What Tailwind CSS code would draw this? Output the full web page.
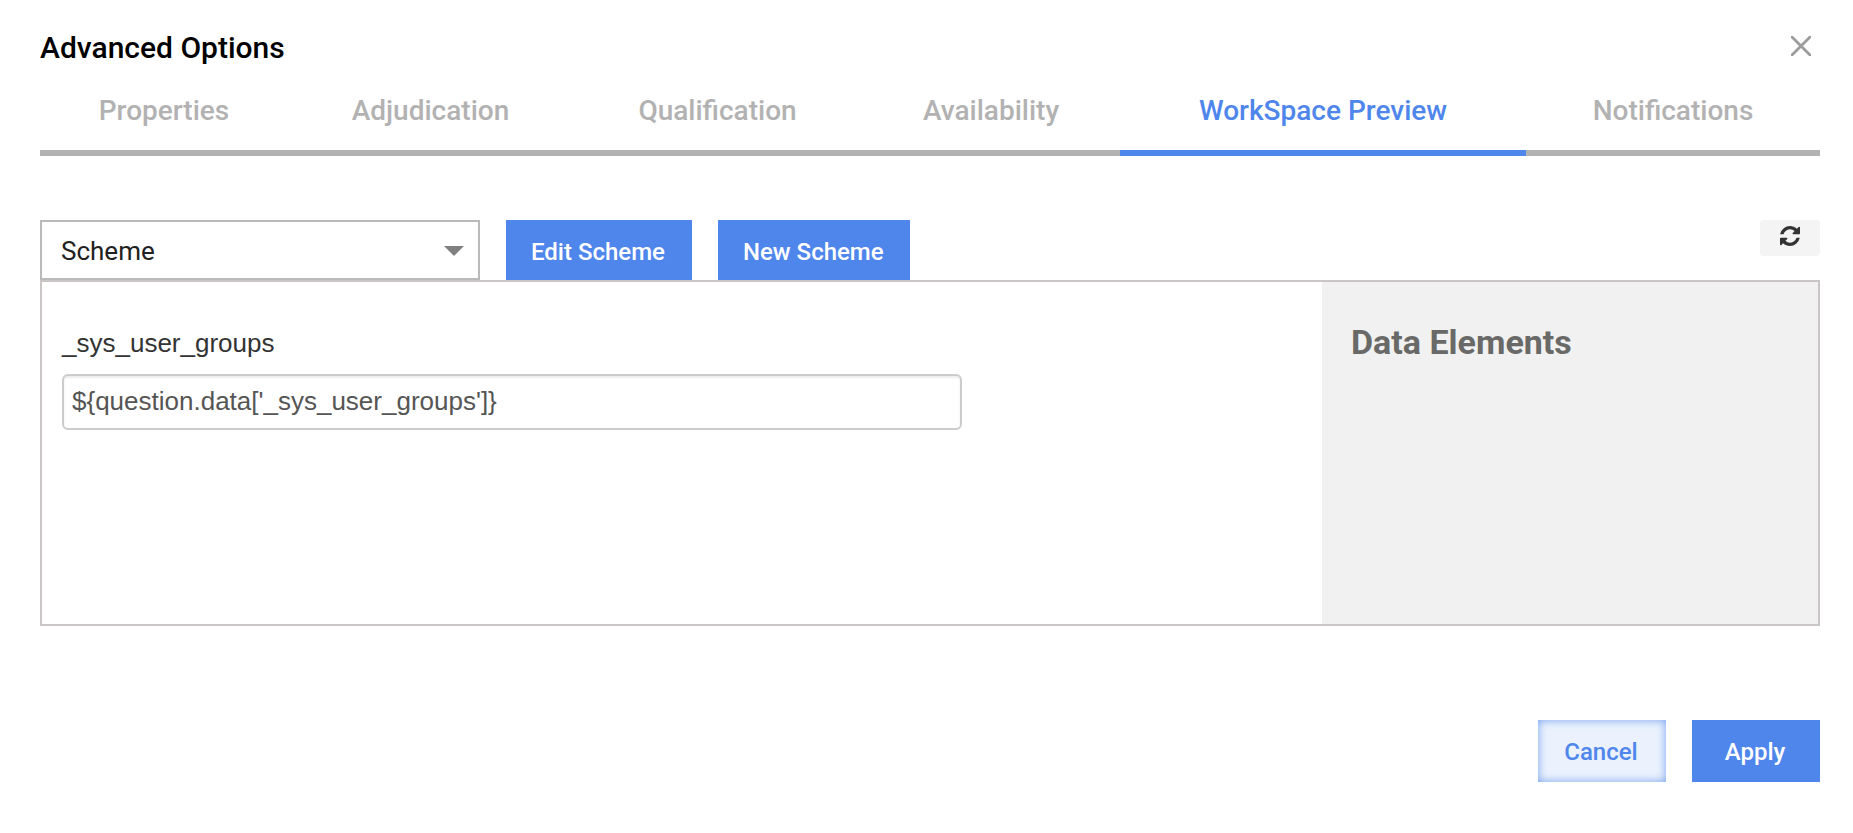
<!DOCTYPE html>
<html lang="en">
<head>
<meta charset="utf-8">
<meta name="viewport" content="width=device-width, initial-scale=1">
<title>Advanced Options</title>
<script src="https://cdn.jsdelivr.net/npm/@tailwindcss/browser@4"></script>
</head>
<body class="bg-white font-[Roboto,sans-serif]">
<main class="pl-10 pr-[33px] pt-7 pb-12">
  <header class="flex items-start justify-between">
    <h1 class="text-[30px] leading-10 font-medium text-black">Advanced Options</h1>
    <button type="button" aria-label="Close" class="mr-[9px] mt-2 size-5">
      <svg viewBox="0 0 20 20" class="size-5" fill="none" stroke="#9c9c9c" stroke-width="2.8" stroke-linecap="round"><path d="M1 1 19 19M19 1 1 19"/></svg>
    </button>
  </header>

  <nav class="mt-[23px] grid grid-cols-[248fr_285fr_289fr_258fr_406fr_294fr] text-center text-[28px] leading-10 font-medium text-[#b2b2b2]">
    <a href="#properties" class="border-b-6 border-[#b2b2b2] pb-[19px]">Properties</a>
    <a href="#adjudication" class="border-b-6 border-[#b2b2b2] pb-[19px]">Adjudication</a>
    <a href="#qualification" class="border-b-6 border-[#b2b2b2] pb-[19px]">Qualification</a>
    <a href="#availability" class="border-b-6 border-[#b2b2b2] pb-[19px]">Availability</a>
    <a href="#preview" aria-current="page" class="border-b-6 border-[#4f86ec] pb-[19px] text-[#4f86ec]">WorkSpace Preview</a>
    <a href="#notifications" class="border-b-6 border-[#b2b2b2] pb-[19px]">Notifications</a>
  </nav>

  <div class="mt-16 flex items-start gap-[26px] text-2xl font-medium">
    <div class="relative w-[440px]">
      <select aria-label="Scheme" class="block h-[60px] w-full appearance-none border-2 border-[#bababa] bg-white pl-[19px] pt-0.5 text-[26px] font-normal text-[#212121]">
        <option>Scheme</option>
      </select>
      <svg viewBox="0 0 20 10" class="pointer-events-none absolute right-4 top-[26px] h-[10px] w-5" fill="#808080"><path d="M0 0H20L10 10Z"/></svg>
    </div>
    <button type="button" class="h-[60px] bg-[#4f86ec] pl-[25px] pr-[27px] pt-1 text-white">Edit Scheme</button>
    <button type="button" class="h-[60px] bg-[#4f86ec] pl-[25px] pr-[26px] pt-1 text-white">New Scheme</button>
    <button type="button" aria-label="Refresh" class="ml-auto flex h-9 w-[60px] justify-center rounded bg-[#f4f4f4] pt-1.5">
      <svg viewBox="0 0 1536 1536" class="size-5" fill="#333"><path d="M1511 928q0 5-1 7-64 268-268 434.500T764 1536q-146 0-282.500-55T238 1324l-129 129q-19 19-45 19t-45-19-19-45V960q0-26 19-45t45-19h448q26 0 45 19t19 45-19 45l-137 137q71 66 161 102t187 36q134 0 250-65t186-179q11-17 53-117 8-23 30-23h192q13 0 22.500 9.500t9.500 22.500zm25-800v448q0 26-19 45t-45 19h-448q-26 0-45-19t-19-45 19-45l138-138Q969 256 768 256q-134 0-250 65T332 500q-11 17-53 117-8 23-30 23H50q-13 0-22.500-9.500T18 608v-7q65-268 270-434.500T768 0q146 0 284 55.500T1297 212l130-129q19-19 45-19t45 19 19 45z"/></svg>
    </button>
  </div>

  <section class="flex min-h-[346px] border-2 border-[#cac6c6]">
    <div class="min-w-0 flex-1 pl-5 pt-[41px] font-['Liberation_Sans',Arial,sans-serif] text-[26px]">
      <label for="groups" class="block leading-10 text-[#333]">_sys_user_groups</label>
      <input id="groups" type="text" value="${question.data['_sys_user_groups']}" class="mt-[11px] block h-14 w-full max-w-[900px] rounded-md border-2 border-[#ccc] pb-0.5 pl-2 text-[#555] shadow-[inset_0_2px_2px_rgba(0,0,0,0.075)]">
    </div>
    <aside class="w-[496px] bg-[#f1f1f1] pl-[29px] pt-10">
      <h2 class="text-[34px] leading-10 font-bold text-[#696967]">Data Elements</h2>
    </aside>
  </section>

  <footer class="mt-[94px] flex justify-end gap-[26px] text-2xl font-medium">
    <button type="button" class="h-[62px] w-32 bg-[#ebf2fd] pt-0.5 pr-0.5 text-[#4f86ec] shadow-[inset_0_0_10px_rgba(79,134,236,0.75)]">Cancel</button>
    <button type="button" class="h-[62px] w-32 bg-[#4f86ec] pt-0.5 pr-0.5 text-white">Apply</button>
  </footer>
</main>
</body>
</html>
